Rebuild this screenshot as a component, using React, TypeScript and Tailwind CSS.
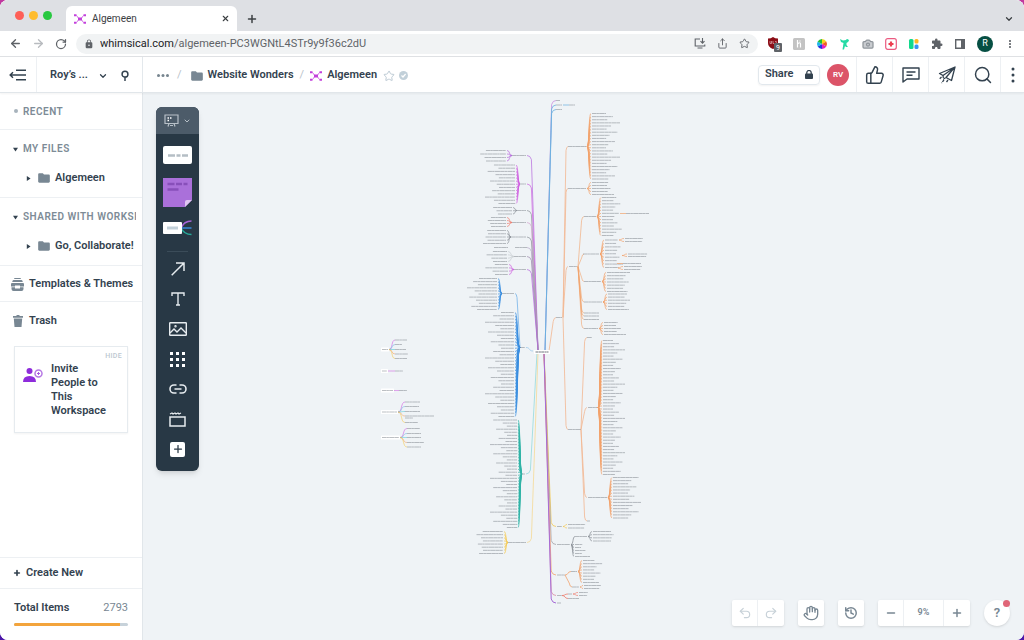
import type { ReactNode } from "react";
import {
  ArrowLeft,
  ArrowRight,
  Camera,
  ChevronDown,
  Hand,
  History,
  Minus,
  Plus,
  Redo2,
  RotateCw,
  Search,
  Share,
  Star,
  ThumbsUp,
  Undo2,
  X,
} from "lucide-react";
import { MdExtension, MdFolder, MdLock, MdMoreVert } from "react-icons/md";

type Fan = {
  side: 1 | -1;
  hub: [number, number];
  tip: number;
  from: number;
  to: number;
  count: number;
  widths: [number, number];
  color: string;
  label?: number;
};

type Branch = { from: [number, number]; to: [number, number]; color: string; width?: number };

const ORANGE = "#f2a26c";
const BLUE = "#3a8ee0";
const PURPLE = "#b565dc";
const MAGENTA = "#cf5fe0";
const TEAL = "#2fb3a6";
const YELLOW = "#f5c94f";
const GRAY = "#8b9198";
const RED = "#ee7d6e";

const fans: Fan[] = [
  { side: -1, hub: [512, 155.5], tip: 507, from: 150.5, to: 161, count: 4, widths: [20, 29], color: PURPLE, label: 527 },
  { side: -1, hub: [520, 184], tip: 516, from: 165, to: 203.5, count: 13, widths: [16, 30], color: MAGENTA, label: 527 },
  { side: -1, hub: [517, 210.5], tip: 513, from: 207.5, to: 214, count: 3, widths: [14, 20], color: GRAY, label: 527 },
  { side: -1, hub: [512, 222.5], tip: 507, from: 217.5, to: 226.5, count: 4, widths: [15, 20], color: RED, label: 527 },
  { side: -1, hub: [511, 237], tip: 507, from: 230.5, to: 243.5, count: 5, widths: [18, 23], color: GRAY, label: 527 },
  { side: -1, hub: [514, 256.5], tip: 508, from: 251.5, to: 261.5, count: 4, widths: [14, 24], color: "#c9ced3", label: 527 },
  { side: -1, hub: [514, 269.5], tip: 509, from: 264.5, to: 274.5, count: 4, widths: [13, 28], color: MAGENTA, label: 527 },
  { side: -1, hub: [502, 293.5], tip: 498, from: 278.5, to: 309.5, count: 11, widths: [18, 30], color: BLUE, label: 515 },
  { side: -1, hub: [520, 347.5], tip: 515, from: 312.5, to: 416.5, count: 33, widths: [13, 29], color: BLUE, label: 526 },
  { side: -1, hub: [522, 474], tip: 518, from: 420, to: 527.5, count: 36, widths: [10, 27], color: TEAL, label: 526 },
  { side: -1, hub: [508, 542.5], tip: 504, from: 531.5, to: 553.5, count: 8, widths: [20, 28], color: YELLOW, label: 527 },
  { side: 1, hub: [587, 146.5], tip: 591, from: 113.5, to: 179, count: 22, widths: [14, 28], color: ORANGE, label: 568 },
  { side: 1, hub: [587, 188.5], tip: 591, from: 182.5, to: 194.5, count: 5, widths: [15, 22], color: ORANGE, label: 568 },
  { side: 1, hub: [597, 216.5], tip: 601, from: 197.5, to: 235.5, count: 13, widths: [11, 20], color: ORANGE, label: 584 },
  { side: 1, hub: [600, 254], tip: 604, from: 240, to: 267.5, count: 9, widths: [11, 18], color: ORANGE, label: 583 },
  { side: 1, hub: [602, 281.5], tip: 606, from: 272.5, to: 291.5, count: 7, widths: [16, 23], color: ORANGE, label: 584 },
  { side: 1, hub: [603, 302], tip: 607, from: 294, to: 309.5, count: 6, widths: [16, 22], color: ORANGE, label: 584 },
  { side: 1, hub: [599, 328.5], tip: 603, from: 322.5, to: 334.5, count: 5, widths: [12, 22], color: ORANGE, label: 584 },
  { side: 1, hub: [598, 407.5], tip: 602, from: 340.5, to: 474.5, count: 44, widths: [10, 22], color: ORANGE, label: 588 },
  { side: 1, hub: [608, 497.5], tip: 612, from: 477.5, to: 518, count: 14, widths: [15, 28], color: ORANGE, label: 588 },
  { side: 1, hub: [563, 526.5], tip: 567, from: 524.5, to: 528, count: 2, widths: [16, 19], color: YELLOW, label: 557 },
  { side: 1, hub: [571, 544.5], tip: 574, from: 544.5, to: 556.5, count: 5, widths: [6, 15], color: GRAY, label: 557 },
  { side: 1, hub: [588, 536.5], tip: 592, from: 531.5, to: 541, count: 4, widths: [18, 22], color: GRAY, label: 575 },
  { side: 1, hub: [578, 571.5], tip: 582, from: 560.5, to: 582.5, count: 8, widths: [11, 21], color: ORANGE, label: 571 },
  { side: 1, hub: [580, 587], tip: 583, from: 585.5, to: 588.5, count: 2, widths: [15, 20], color: ORANGE, label: 572 },
  { side: 1, hub: [573, 594], tip: 578, from: 592.5, to: 595.5, count: 2, widths: [8, 10], color: RED, label: 568 },
  { side: 1, hub: [619, 240], tip: 624, from: 238.5, to: 241.5, count: 2, widths: [17, 19], color: ORANGE },
  { side: 1, hub: [622, 255.5], tip: 627, from: 254, to: 256.5, count: 2, widths: [18, 21], color: ORANGE },
  { side: 1, hub: [618, 268], tip: 623, from: 266.5, to: 269.5, count: 2, widths: [16, 21], color: ORANGE },
];

const smallMaps = [
  { x: 381, y: 349.5, w: 8, tip: 395, leaves: [340, 344.5, 349.5, 354, 358.5], lengths: [12, 7, 11, 13, 12] },
  { x: 381, y: 371, w: 7, tip: 395, leaves: [371], lengths: [8] },
  { x: 381, y: 390.5, w: 13, tip: 399, leaves: [390.5], lengths: [8] },
  { x: 381, y: 412, w: 17, tip: 405, leaves: [402, 406.5, 411.5, 416, 422.5], lengths: [15, 14, 15, 29, 13] },
  { x: 381, y: 437.5, w: 19, tip: 407, leaves: [428.5, 433.5, 437.5, 442.5, 447], lengths: [13, 14, 14, 17, 14] },
];
const smallColors = [MAGENTA, "#73b7e4", "#58c6d5", ORANGE, YELLOW];

const upperLeft: [number, string][] = [
  [155.5, PURPLE],
  [184, MAGENTA],
  [210.5, GRAY],
  [222.5, "#d2a4cf"],
  [237, GRAY],
  [247.5, "#b7a6c8"],
  [256.5, "#9d8aae"],
  [269.5, PURPLE],
];

const branches: Branch[] = [
  ...upperLeft.map(([y, color]): Branch => ({ from: [538, 350], to: [527, y], color, width: 0.7 })),
  { from: [533, 351], to: [526, 347.5], color: "#9cc9ec" },
  { from: [520, 347.5], to: [515, 293.5], color: "#75b3e8" },
  { from: [537, 353], to: [526, 474], color: "#94d9dc" },
  { from: [538, 353], to: [527, 542.5], color: "#f5d995" },
  { from: [545, 351], to: [556, 100.5], color: "#c98ee0" },
  { from: [545, 351], to: [556, 105], color: "#68b0e0" },
  { from: [545, 351], to: [556, 109.5], color: "#68b0e0" },
  { from: [549, 351], to: [556, 317.5], color: "#f3b690" },
  { from: [563, 317.5], to: [568, 146.5], color: "#f3b690" },
  { from: [563, 317.5], to: [568, 188.5], color: "#f3b690" },
  { from: [563, 317.5], to: [568, 266.5], color: "#f3b690" },
  { from: [563, 317.5], to: [568, 429.5], color: "#f3b690" },
  ...[216.5, 254, 281.5, 302, 313, 316, 319.5, 328.5].map(
    (y): Branch => ({ from: [578, 266.5], to: [584, y], color: ORANGE, width: 0.6 })
  ),
  ...[337.5, 407.5, 497.5, 521].map(
    (y): Branch => ({ from: [581, 429.5], to: [587, y], color: "#f3b690" })
  ),
  { from: [544, 353], to: [556, 526.5], color: YELLOW },
  { from: [544, 353], to: [556, 544.5], color: "#a2a2a8" },
  { from: [544, 353], to: [556, 575], color: ORANGE },
  { from: [544, 353], to: [556, 595.5], color: "#dc8aa2" },
  { from: [544, 353], to: [556, 603], color: "#a66bd6", width: 1 },
  { from: [571, 544.5], to: [575, 536.5], color: GRAY },
  { from: [565, 575], to: [571, 571.5], color: ORANGE },
  { from: [565, 575], to: [572, 587], color: ORANGE },
  { from: [562, 595.5], to: [568, 594], color: RED },
  { from: [562, 595.5], to: [568, 598.5], color: RED },
];

// [x, y, length]
const labels: [number, number, number][] = [
  [556, 100.5, 4], [556, 105, 6], [569, 105, 6], [556, 109.5, 6],
  [556, 317.5, 6], [569, 266.5, 8], [568, 429.5, 13],
  [584, 313, 15], [584, 316, 15], [584, 319.5, 15],
  [587, 337.5, 5], [587, 521, 3], [494, 247.5, 14], [515, 247.5, 12],
  [626, 213.5, 23], [557, 575, 8], [557, 595.5, 5], [557, 603, 4],
  [568, 598.5, 11], [623, 263.5, 18],
];

function curve(x1: number, y1: number, x2: number, y2: number) {
  const dx = x2 - x1;
  return `M${x1} ${y1}C${x1 + dx * 0.65} ${y1} ${x1 + dx * 0.35} ${y2} ${x2} ${y2}`;
}

function trunk(x1: number, y1: number, x2: number, y2: number) {
  const dx = x2 - x1;
  const dy = y2 - y1;
  if (Math.abs(dy) < 12) return curve(x1, y1, x2, y2);
  const bend = Math.sign(dy) * 4;
  return `M${x1} ${y1}L${x1 + dx * 0.6} ${y2 - bend}Q${x1 + dx * 0.7} ${y2} ${x2} ${y2}`;
}

function TinyLine({ x, y, length }: { x: number; y: number; length: number }) {
  return (
    <path d={`M${x} ${y}h${length}`} stroke="#737a82" strokeWidth="1" strokeDasharray="4.3 .2 2.4 .3 5.1 .2" opacity=".48" />
  );
}

function FanShape({ fan }: { fan: Fan }) {
  const [hx, hy] = fan.hub;
  const step = (fan.to - fan.from) / (fan.count - 1);
  const rows = Array.from({ length: fan.count }, (_, i) => {
    const mix = ((i * 7 + fan.count * 3) % 11) / 10;
    const length = fan.widths[0] + (fan.widths[1] - fan.widths[0]) * mix * mix;
    return { y: fan.from + i * step, length };
  });
  return (
    <g>
      {rows.map(({ y, length }) => (
        <g key={y}>
          <path d={curve(hx, hy, fan.tip, y)} stroke={fan.color} strokeWidth=".7" />
          <TinyLine x={fan.side === 1 ? fan.tip + 1 : fan.tip - 1 - length} y={y} length={length} />
        </g>
      ))}
      {fan.label && <TinyLine x={Math.min(hx, fan.label)} y={hy} length={Math.abs(hx - fan.label) - 1} />}
    </g>
  );
}

function MindMap() {
  return (
    <svg
      className="absolute top-0 left-0 h-[547px] w-[881px]"
      viewBox="143 93 881 547"
      fill="none"
      role="img"
      aria-label="Mind map"
    >
      {branches.map((b, i) => (
        <path key={i} d={trunk(b.from[0], b.from[1], b.to[0], b.to[1])} stroke={b.color} strokeWidth={b.width ?? 0.8} />
      ))}
      {fans.map((fan, i) => (
        <FanShape key={i} fan={fan} />
      ))}
      {labels.map(([x, y, length], i) => (
        <TinyLine key={i} x={x} y={y} length={length} />
      ))}
      <path d="M563 105h6" stroke="#68b0e0" strokeWidth=".7" />
      <path d="M620 213.5h6M617 263.5h6" stroke={ORANGE} strokeWidth=".7" />
      <rect x="534" y="350" width="16" height="4" rx=".5" fill="#fff" />
      <path d="M535.5 352h13" stroke="#4b535c" strokeWidth="1" strokeDasharray="3 .4 2 .3" opacity=".8" />
      {smallMaps.map((map) => (
        <g key={map.y}>
          {map.leaves.map((y, i) => (
            <g key={y}>
              <path d={curve(map.x + map.w, map.y, map.tip, y)} stroke={smallColors[i]} strokeWidth=".8" opacity=".75" />
              <TinyLine x={map.tip} y={y} length={map.lengths[i]} />
            </g>
          ))}
          <rect x={map.x} y={map.y - 2} width={map.w} height="4" rx=".5" fill="#fff" />
          <TinyLine x={map.x + 1} y={map.y} length={map.w - 2} />
        </g>
      ))}
      <TinyLine x={405} y={418} length={8} />
    </svg>
  );
}

function WhimsicalMark() {
  return (
    <svg className="h-[10px] w-3 shrink-0" viewBox="0 0 12 10" fill="none" stroke="#c340dc" strokeWidth="1">
      <path d="M4 5h4" strokeWidth="3" />
      <path d="M0 1.200h2.500M0 8.800h2.500M9.500 1.200H12M9.500 8.800H12" strokeWidth="2" />
      <path d="M2.300 1.500Q3.500 2 4.200 4M9.700 1.500Q8.500 2 7.800 4M2.300 8.500Q3.500 8 4.200 6M9.700 8.500Q8.500 8 7.800 6" opacity=".7" />
    </svg>
  );
}

function IconButton({ label, className = "", children }: { label: string; className?: string; children: ReactNode }) {
  return (
    <button type="button" aria-label={label} className={`flex shrink-0 items-center justify-center ${className}`}>
      {children}
    </button>
  );
}

function Extensions() {
  return (
    <div className="flex shrink-0 items-center gap-[11px] pr-2 pl-[10px]">
      <IconButton label="uBlock">
        <svg className="h-[16px] w-[14px]" viewBox="0 0 14 16">
          <path d="M0 2.500Q3 2.500 5 1Q7 2.500 10 2.500V7Q10 11 5 13Q0 11 0 7Z" fill="#8b0d16" />
          <path d="M2 5v2.500h1.500V5M5 5v2.500h1.200M7 5.500h1.300v1.500" stroke="#f0c8ca" strokeWidth=".6" fill="none" />
          <rect x="6" y="7" width="8" height="9" rx="1" fill="#5f6368" />
          <text x="8" y="14" fill="#fff" fontSize="7" fontFamily="Roboto, sans-serif">9</text>
        </svg>
      </IconButton>
      <IconButton label="Honey">
        <svg className="h-3 w-3" viewBox="0 0 12 12">
          <rect width="12" height="12" rx="1.500" fill="#c3c3c3" />
          <path d="M4.500 2v7.500M4.500 6q3-2.500 3 0v3.500M7 2.500v1" stroke="#fff" strokeWidth="1.200" fill="none" />
        </svg>
      </IconButton>
      <IconButton label="Color picker">
        <svg className="h-3 w-3" viewBox="-6 -6 12 12">
          <path d="M0 0V-5A5 5 0 0 1 4.300-2.500Z" fill="#f6d31d" />
          <path d="M0 0 4.300-2.500A5 5 0 0 1 4.300 2.500Z" fill="#f05c23" />
          <path d="M0 0 4.300 2.500A5 5 0 0 1 0 5Z" fill="#df1ec4" />
          <path d="M0 0V5A5 5 0 0 1-4.300 2.500Z" fill="#2236e0" />
          <path d="M0 0-4.300 2.500A5 5 0 0 1-4.300-2.500Z" fill="#20b7ea" />
          <path d="M0 0-4.300-2.500A5 5 0 0 1 0-5Z" fill="#21bd35" />
        </svg>
      </IconButton>
      <IconButton label="Toucan">
        <svg className="h-3 w-3" viewBox="0 0 12 12" fill="#25dba5">
          <path d="M1 1l3 1.500L7 2a1.500 1.500 0 1 1 2 2L7.500 5v2L9 9H7L6 8l-1 3.500H3.500L4.500 5 2 4Z" />
        </svg>
      </IconButton>
      <IconButton label="Screenshot">
        <Camera className="h-3 w-3 fill-[#c9ccd0] text-[#8f959b]" strokeWidth={2.5} />
      </IconButton>
      <IconButton label="Recorder">
        <svg className="h-3 w-3" viewBox="0 0 12 12" fill="none">
          <rect x=".7" y=".7" width="10.600" height="10.600" rx="2" stroke="#eb5a80" strokeWidth="1.200" />
          <path d="M6 3.500v5M3.500 6h5" stroke="#ec3e50" strokeWidth="2.200" />
        </svg>
      </IconButton>
      <IconButton label="Blocks">
        <svg className="h-3 w-3" viewBox="0 0 12 12">
          <rect x="1" y="1" width="4.500" height="10" rx="1.500" fill="#12d98c" />
          <rect x="6.500" y="1" width="4" height="4.500" rx="1.500" fill="#ffb824" />
          <rect x="6.500" y="6.500" width="4" height="4.500" rx="1.500" fill="#3992f3" />
        </svg>
      </IconButton>
      <IconButton label="Extensions"><MdExtension className="h-3 w-3 text-[#5f6368]" /></IconButton>
      <IconButton label="Side panel">
        <svg className="h-3 w-3" viewBox="0 0 12 12">
          <path d="M1.700 1.700h8.600v8.600H1.700Z" fill="none" stroke="#5f6368" strokeWidth="1.400" />
          <path d="M7 1.500h3.500v9H7Z" fill="#5f6368" />
        </svg>
      </IconButton>
      <IconButton label="Profile" className="h-4 w-4 rounded-full bg-[#064f43] text-[9px] text-white">R</IconButton>
      <IconButton label="Browser menu" className="w-3"><MdMoreVert className="h-4 w-4 text-[#5f6368]" /></IconButton>
    </div>
  );
}

function BrowserChrome() {
  return (
    <header className="shrink-0 bg-white font-[Roboto,sans-serif] text-[#3c4043]">
      <div className="flex h-[31px] items-end bg-[#dee0e4] pl-[15px]">
        <div className="flex h-[31px] items-center gap-[5px]">
          <span className="h-[9px] w-[9px] rounded-full bg-[#fe5f57]" />
          <span className="h-[9px] w-[9px] rounded-full bg-[#febc2e]" />
          <span className="h-[9px] w-[9px] rounded-full bg-[#28c840]" />
        </div>
        <div className="ml-[14px] flex h-[25px] w-[171px] items-center rounded-t-md bg-white pr-[7px] pl-2">
          <WhimsicalMark />
          <span className="ml-[6px] grow text-[10px]">Algemeen</span>
          <IconButton label="Close tab"><X className="h-[9px] w-[9px]" strokeWidth={3} /></IconButton>
        </div>
        <IconButton label="New tab" className="ml-[9px] h-[25px]"><Plus className="h-3 w-3" strokeWidth={3} /></IconButton>
        <IconButton label="Search tabs" className="mr-[10px] ml-auto h-[25px]"><ChevronDown className="h-[10px] w-[10px]" strokeWidth={3} /></IconButton>
      </div>
      <div className="flex h-[26px] items-center border-b border-[#dfe1e4] pl-[9px]">
        <div className="flex shrink-0 items-center gap-[10px] text-[#5f6368]">
          <IconButton label="Back"><ArrowLeft className="h-[13px] w-[13px]" strokeWidth={2.5} /></IconButton>
          <IconButton label="Forward" className="text-[#b8bbbf]"><ArrowRight className="h-[13px] w-[13px]" strokeWidth={2.5} /></IconButton>
          <IconButton label="Reload"><RotateCw className="h-3 w-3" strokeWidth={2.5} /></IconButton>
        </div>
        <div className="ml-[9px] flex h-5 min-w-0 grow items-center rounded-full bg-[#f1f3f4] px-2 text-[#5f6368]">
          <MdLock className="h-[10px] w-[10px] shrink-0" />
          <a href="https://whimsical.com" className="ml-[6px] grow truncate pt-px text-[11px]">
            <span className="text-[#202124]">whimsical.com</span>/algemeen-PC3WGNtL4STr9y9f36c2dU
          </a>
          <div className="flex items-center gap-[11px]">
            <IconButton label="Install">
              <svg className="h-[11px] w-3" viewBox="0 0 12 11" fill="none" stroke="currentColor" strokeWidth="1.100">
                <path d="M6 1H1.200v7h9.600V6.500M3.500 10h5M8.500 0v5M6.500 3.200l2 2 2-2" />
              </svg>
            </IconButton>
            <IconButton label="Share page"><Share className="h-[11px] w-[11px]" /></IconButton>
            <IconButton label="Bookmark"><Star className="h-[11px] w-[11px]" /></IconButton>
          </div>
        </div>
        <Extensions />
      </div>
    </header>
  );
}

function AppHeader() {
  return (
    <div className="z-10 flex h-9 shrink-0 items-stretch border-b border-[#e1e6ea] bg-white shadow-xs">
      <div className="flex w-[143px] shrink-0 items-center border-r border-[#e3e8ec]">
        <IconButton label="Collapse sidebar" className="h-full w-[37px] border-r border-[#edf0f3]">
          <svg className="h-3 w-[18px]" viewBox="0 0 18 12" fill="none" stroke="currentColor" strokeWidth="1.500">
            <path d="M7 1.200h10M2 6h15M7 10.800h10M4 3.300 1.200 6 4 8.700" />
          </svg>
        </IconButton>
        <button type="button" className="flex grow items-center justify-between pt-0.5 pr-2 pl-[13px]">
          Roy’s ... <ChevronDown className="h-[10px] w-[10px]" strokeWidth={3} />
        </button>
        <IconButton label="Search workspace" className="mt-0.5 mr-3 ml-1">
          <svg className="h-[11px] w-[10px]" viewBox="0 0 10 12" fill="none" stroke="currentColor" strokeWidth="1.600">
            <circle cx="5" cy="4.500" r="3.200" /><path d="M5 7.500V12" />
          </svg>
        </IconButton>
      </div>
      <nav className="flex items-center pt-0.5 pl-[14px]" aria-label="Breadcrumb">
        <IconButton label="Parent folders">
          <svg className="h-[3px] w-3" viewBox="0 0 12 3" fill="#77858f">
            <circle cx="1.500" cy="1.500" r="1.500" /><circle cx="6" cy="1.500" r="1.500" /><circle cx="10.500" cy="1.500" r="1.500" />
          </svg>
        </IconButton>
        <span className="mx-2 font-normal text-[#b8c2ca]">/</span>
        <MdFolder className="h-[14px] w-[14px] text-[#788793]" />
        <a href="#website-wonders" className="ml-1">Website Wonders</a>
        <span className="mx-[6px] font-normal text-[#b8c2ca]">/</span>
        <WhimsicalMark />
        <a href="#algemeen" className="ml-[5px]">Algemeen</a>
        <IconButton label="Favourite" className="ml-[6px]"><Star className="h-3 w-3 text-[#bdcbd5]" /></IconButton>
        <svg className="ml-1 h-[9px] w-[9px]" viewBox="0 0 9 9">
          <circle cx="4.500" cy="4.500" r="4.500" fill="#c2d0d9" />
          <path d="m2.500 4.500 1.500 1.500L6.600 3" fill="none" stroke="#fff" strokeWidth="1.200" />
        </svg>
      </nav>
      <div className="ml-auto flex items-center">
        <button type="button" className="flex h-5 w-[62px] items-center justify-between rounded-sm border border-[#e2e8ed] px-[6px] shadow-xs">
          <span>Share</span>
          <svg className="h-[9px] w-2" viewBox="0 0 9 10">
            <path d="M2 5V3a2.500 2.500 0 0 1 5 0v2" fill="none" stroke="currentColor" strokeWidth="1.400" />
            <rect y="4" width="9" height="6" rx="1" fill="currentColor" />
          </svg>
        </button>
        <button type="button" className="mx-[7px] h-[22px] w-[22px] rounded-full bg-[#dc5468] text-[8px] text-white">RV</button>
        <IconButton label="Vote" className="h-full w-9 border-l border-[#edf0f3]"><ThumbsUp className="h-5 w-5" strokeWidth={1.75} /></IconButton>
        <IconButton label="Comments" className="h-full w-9 border-l border-[#edf0f3]">
          <svg className="h-4 w-[18px]" viewBox="0 0 18 16" fill="none" stroke="currentColor" strokeWidth="1.400">
            <path d="M1 1h16v11H5l-4 3ZM4.500 5h9M4.500 8.300h6" strokeLinejoin="round" />
          </svg>
        </IconButton>
        <IconButton label="Present" className="h-full w-9 border-l border-[#edf0f3]">
          <svg className="h-[18px] w-[18px]" viewBox="0 0 18 18" fill="none" stroke="currentColor" strokeWidth="1.300" strokeLinejoin="round">
            <path d="M17 1 1.500 7.500 5 9.500 16.500 1.500 8 11.500l5.500 3Z" />
            <path d="m5 9.500.5 3.500L8 11.500M3.500 11 1 13.500M6 14l-2.500 3M10 14l-1.500 2" strokeDasharray="2.500 1" />
          </svg>
        </IconButton>
        <IconButton label="Search" className="h-full w-9 border-l border-[#edf0f3]"><Search className="h-5 w-5" strokeWidth={1.75} /></IconButton>
        <IconButton label="More" className="h-full w-6 border-l border-[#edf0f3]">
          <svg className="h-4 w-1" viewBox="0 0 4 16" fill="currentColor">
            <circle cx="2" cy="2" r="1.500" /><circle cx="2" cy="8" r="1.500" /><circle cx="2" cy="14" r="1.500" />
          </svg>
        </IconButton>
      </div>
    </div>
  );
}

function Triangle({ open }: { open?: boolean }) {
  return (
    <svg className="h-[5px] w-[5px] shrink-0" viewBox="0 0 6 6" fill="currentColor">
      <path d={open ? "M0 1h6L3 5.500Z" : "M1 0v6l4.500-3Z"} />
    </svg>
  );
}

function FolderSection({ title, folder }: { title: string; folder: string }) {
  return (
    <section className="flex h-[68px] flex-col justify-between border-b border-[#edf0f3] pt-3 pr-[6px] pb-[11px]">
      <h2 className="flex items-center gap-[5px] pl-[13px]">
        <Triangle open />
        <span className="overflow-hidden text-[10px] leading-[14px] tracking-wider whitespace-nowrap text-[#7d8b96]">{title}</span>
      </h2>
      <a href="#folder" className="flex items-center pl-[26px] leading-4">
        <Triangle />
        <MdFolder className="mr-1 ml-[6px] h-[14px] w-[14px] text-[#788793]" />
        {folder}
      </a>
    </section>
  );
}

function Sidebar() {
  return (
    <aside className="flex w-[143px] shrink-0 flex-col border-r border-[#e1e6ea] bg-white">
      <h2 className="flex h-[37px] shrink-0 items-center gap-[5px] border-b border-[#edf0f3] pl-[14px] text-[10px] tracking-wider text-[#7d8b96]">
        <span className="h-1 w-1 rounded-full bg-[#a7b3bc]" />
        RECENT
      </h2>
      <FolderSection title="MY FILES" folder="Algemeen" />
      <FolderSection title="SHARED WITH WORKSPACE" folder="Go, Collaborate!" />
      <a href="#templates" className="flex h-9 shrink-0 items-center border-b border-[#edf0f3] pt-0.5 pl-[11px]">
        <svg className="mr-[5px] h-[13px] w-[13px]" viewBox="0 0 13 13" fill="#788793">
          <path d="M4 0h5q1 0 1 1H3q0-1 1-1ZM2.500 2h8q1 0 1.300 2H1.200Q1.500 2 2.500 2Z" />
          <path d="M1 5h11q1 0 1 1v2.500H9V7.500H4v1H0V6q0-1 1-1ZM.5 9.300H4v1.200h5V9.300h3.500V11q0 2-2 2h-8q-2 0-2-2Z" />
        </svg>
        Templates &amp; Themes
      </a>
      <a href="#trash" className="flex h-9 shrink-0 items-center pt-0.5 pl-[13px]">
        <svg className="mr-[6px] h-3 w-[10px]" viewBox="0 0 10 12" fill="#788793">
          <path d="M3.500 0h3v1H10v1.700H0V1h3.500ZM.8 3.500h8.400L8.500 12h-7Z" />
        </svg>
        Trash
      </a>
      <div className="mx-[14px] mt-2 flex h-[87px] shrink-0 flex-col border border-[#e6ebef] pt-1 pl-2 shadow-xs">
        <button type="button" className="self-end pr-[5px] text-[7px] leading-[11px] font-medium tracking-wider text-[#bcc8d1]">HIDE</button>
        <div className="flex gap-2">
          <svg className="mt-[6px] h-[14px] w-5 shrink-0" viewBox="0 0 20 14">
            <circle cx="6.500" cy="3" r="3" fill="#8e2cdb" />
            <path d="M0 14q0-6 6.500-6T13 14Z" fill="#8e2cdb" />
            <circle cx="15.500" cy="5.500" r="3.500" fill="none" stroke="#b678e4" strokeWidth="1.500" />
            <path d="M15.500 4v3M14 5.500h3" stroke="#a85be0" />
          </svg>
          <p className="w-16 leading-[14px]">Invite People to This Workspace</p>
        </div>
      </div>
      <div className="mt-auto border-t border-[#edf0f3]">
        <button type="button" className="flex h-[31px] w-full items-center gap-[5px] border-b border-[#edf0f3] pl-[13px]">
          <Plus className="h-2 w-2" strokeWidth={5} />
          Create New
        </button>
        <div className="h-[51px] px-[14px] pt-3">
          <div className="flex justify-between leading-[14px]">
            <span>Total Items</span>
            <span className="font-normal text-[#788793]">2793</span>
          </div>
          <div className="mt-2 h-[3px] overflow-hidden rounded-full bg-[#c7d2da]">
            <div className="h-full w-[93%] bg-[#f3a43c]" />
          </div>
        </div>
      </div>
    </aside>
  );
}

function Toolbar() {
  return (
    <div className="absolute top-[14px] left-[13px] flex w-[43px] flex-col items-center overflow-hidden rounded-md bg-[#283845] pb-[7px] text-[#e6ebef] shadow-md">
      <IconButton label="Board type" className="h-[27px] w-full gap-1 bg-[#4c5b69] text-[#b7c0c8]">
        <svg className="h-[13px] w-[15px]" viewBox="0 0 15 13" fill="none" stroke="currentColor" strokeWidth="1.200">
          <path d="M1 1h13v8.500H1ZM5 9.500 4 12.500M10 9.500l1 3M6 11.500h3" />
          <path d="M3.500 4H5M6 4h1.500M3.500 6.500H5" stroke="#fff" strokeWidth="1.500" />
        </svg>
        <ChevronDown className="h-2 w-2" strokeWidth={3} />
      </IconButton>
      <IconButton label="Text card" className="mt-3 h-[18px] w-[29px] rounded-xs bg-white">
        <svg className="h-[3px] w-5" viewBox="0 0 20 3" stroke="#b5bec5" strokeWidth="2.500">
          <path d="M0 1.500h7M8.500 1.500h4M14 1.500h6" />
        </svg>
      </IconButton>
      <IconButton label="Sticky note" className="mt-[14px] h-[30px] w-[29px]">
        <svg className="h-[30px] w-[29px]" viewBox="0 0 29 30">
          <path d="M0 0h29v22l-7 7H0Z" fill="#aa70da" />
          <path d="M29 22h-5q-2 0-2 2v5Z" fill="#e0c6f2" />
          <path d="M4.500 6h7M13 6h6M20.500 6h4M4.500 11.500h11" stroke="#884fba" strokeWidth="2.500" />
        </svg>
      </IconButton>
      <IconButton label="Mind map" className="mt-3 h-[16px] w-[29px]">
        <svg className="h-[16px] w-[29px]" viewBox="0 0 29 16" fill="none" strokeWidth="1.500">
          <path d="M18 8q3-7 10.500-7" stroke="#a662d6" />
          <path d="M18 8h10.500" stroke="#3989d8" />
          <path d="M18 8q3 6.500 10.500 6.500" stroke="#27a99a" />
          <rect y="2" width="19" height="12" rx="1" fill="#fff" />
          <path d="M4 8h11" stroke="#c2d0d9" strokeWidth="3" />
        </svg>
      </IconButton>
      <span className="mt-[15px] h-px w-[21px] bg-[#3b4c59]" />
      <div className="mt-0.5 flex flex-col">
        <IconButton label="Connector" className="h-[30px]">
          <svg className="h-[14px] w-[14px]" viewBox="0 0 14 14" fill="none" stroke="currentColor" strokeWidth="1.500">
            <path d="M.7 13.300 13 1M5 1h8v8" />
          </svg>
        </IconButton>
        <IconButton label="Text" className="h-[30px]">
          <svg className="h-[14px] w-[14px]" viewBox="0 0 14 14" fill="none" stroke="currentColor" strokeWidth="1.400">
            <path d="M1 4V1h12v3M7 1v12M5 13h4" />
          </svg>
        </IconButton>
        <IconButton label="Image" className="h-[30px]">
          <svg className="h-[14px] w-[18px]" viewBox="0 0 18 14" fill="none" stroke="currentColor" strokeWidth="1.400">
            <rect x=".7" y=".7" width="16.600" height="12.600" rx=".5" />
            <path d="m1 11 4-4 3 3 4-4 5 5" /><circle cx="6.500" cy="4.200" r=".5" />
          </svg>
        </IconButton>
        <IconButton label="Icons" className="h-[30px]">
          <svg className="h-[15px] w-[15px]" viewBox="0 0 15 15" stroke="#fff" strokeWidth="3" strokeDasharray="3">
            <path d="M0 1.500h15M0 7.500h15M0 13.500h15" />
          </svg>
        </IconButton>
        <IconButton label="Link" className="h-[30px]">
          <svg className="h-[10px] w-[18px]" viewBox="0 0 18 10" fill="none" stroke="currentColor" strokeWidth="1.600">
            <path d="M7.500 1H5a4 4 0 0 0 0 8h2.500M10.500 1H13a4 4 0 0 1 0 8h-2.500M5.500 5h7" />
          </svg>
        </IconButton>
        <IconButton label="Frame" className="h-[30px]">
          <svg className="h-[15px] w-[17px]" viewBox="0 0 17 15" fill="none" stroke="currentColor" strokeWidth="1.500">
            <path d="M1 5h15v9H1Z" />
            <path d="M1 2l2-1 1 1 2-1 1 1 2-1 1 1 2-1" strokeWidth="1.200" />
          </svg>
        </IconButton>
        <IconButton label="More tools" className="h-[30px]">
          <span className="flex h-[15px] w-[15px] items-center justify-center rounded-xs bg-white text-[#283845]">
            <Plus className="h-3 w-3" strokeWidth={2.5} />
          </span>
        </IconButton>
      </div>
    </div>
  );
}

function CanvasControls() {
  return (
    <div className="absolute right-[14px] bottom-[14px] flex h-[26px] items-stretch gap-[14px] text-[#788793]">
      <div className="flex divide-x divide-[#edf0f3] rounded-xs bg-white shadow-sm">
        <IconButton label="Undo" className="w-[26px] text-[#c7d1d8]"><Undo2 className="h-[14px] w-[14px]" /></IconButton>
        <IconButton label="Redo" className="w-[26px] text-[#c7d1d8]"><Redo2 className="h-[14px] w-[14px]" /></IconButton>
      </div>
      <IconButton label="Pan" className="w-[26px] rounded-xs bg-white shadow-sm"><Hand className="h-4 w-4" /></IconButton>
      <IconButton label="Version history" className="w-[26px] rounded-xs bg-white shadow-sm"><History className="h-[14px] w-[14px]" strokeWidth={2.5} /></IconButton>
      <div className="flex divide-x divide-[#edf0f3] rounded-xs bg-white shadow-sm">
        <IconButton label="Zoom out" className="w-[26px]"><Minus className="h-3 w-3" strokeWidth={3} /></IconButton>
        <button type="button" className="w-10 text-[9px]">9%</button>
        <IconButton label="Zoom in" className="w-[26px]"><Plus className="h-3 w-3" strokeWidth={3} /></IconButton>
      </div>
      <button type="button" aria-label="Help" className="relative w-[26px] rounded-full bg-white text-[13px] shadow-sm">
        ?
        <span className="absolute top-0 right-0 h-[7px] w-[7px] rounded-full bg-[#df6577]" />
      </button>
    </div>
  );
}

export default function App() {
  return (
    <div className="h-screen bg-linear-to-b from-[#c0399f] to-[#4b16a8]">
      <div className="flex h-full flex-col overflow-hidden rounded-lg bg-white font-[Roboto,sans-serif] text-[11px] font-semibold text-[#33424f]">
        <div className="font-normal"><BrowserChrome /></div>
        <AppHeader />
        <div className="flex min-h-0 grow">
          <Sidebar />
          <main className="relative min-w-0 grow overflow-hidden bg-[#eff3f6]">
            <MindMap />
            <Toolbar />
            <CanvasControls />
          </main>
        </div>
      </div>
    </div>
  );
}
